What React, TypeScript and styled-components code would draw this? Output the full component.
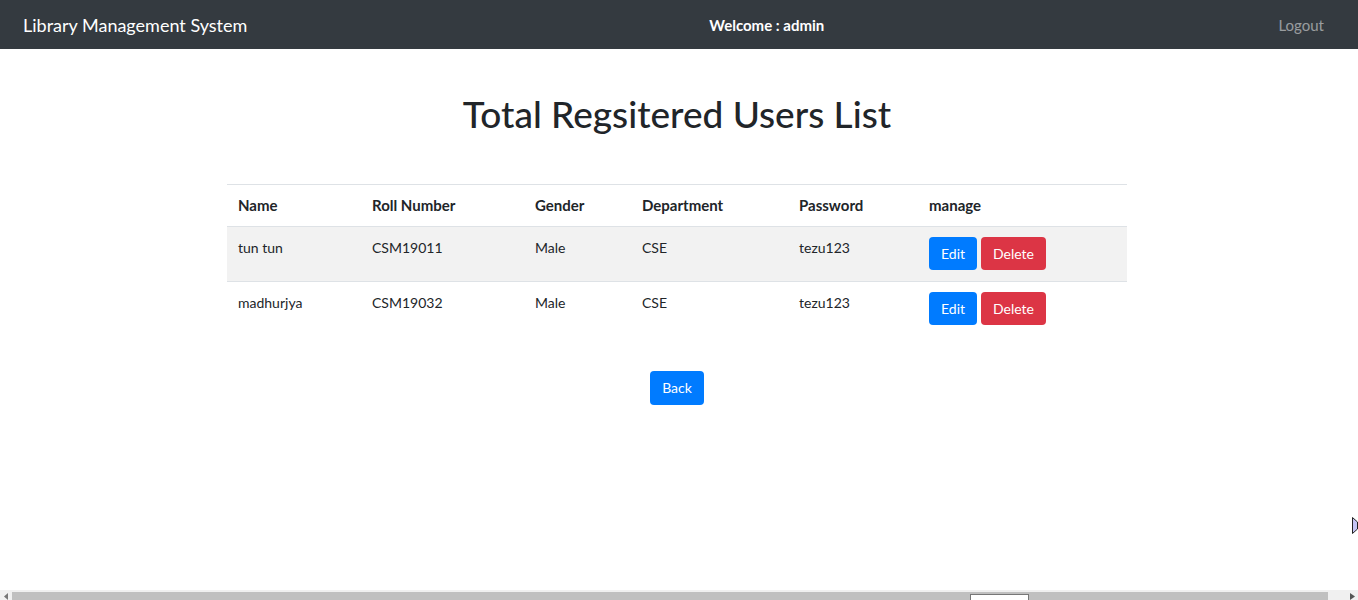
import React from "react";
import styled, { createGlobalStyle } from "styled-components";

type User = {
  name: string;
  roll: string;
  gender: string;
  department: string;
  password: string;
};

const users: User[] = [
  { name: "tun tun", roll: "CSM19011", gender: "Male", department: "CSE", password: "tezu123" },
  { name: "madhurjya", roll: "CSM19032", gender: "Male", department: "CSE", password: "tezu123" },
];

const columns = [
  { label: "Name", width: 134 },
  { label: "Roll Number", width: 163 },
  { label: "Gender", width: 107 },
  { label: "Department", width: 157 },
  { label: "Password", width: 130 },
  { label: "manage", width: 209 },
];

const GlobalStyle = createGlobalStyle`
  html, body {
    margin: 0;
    padding: 0;
    background: #fff;
    font-family: Lato, "Noto Sans", sans-serif;
    color: #212529;
  }
`;

export default function App() {
  return (
    <>
      <GlobalStyle />
      <Page>
        <NavBar>
          <Brand>Library Management System</Brand>
          <Welcome>Welcome : admin</Welcome>
          <Logout>Logout</Logout>
        </NavBar>
        <Main>
          <Title>Total Regsitered Users List</Title>
          <Table>
            <colgroup>
              {columns.map((c) => (
                <col key={c.label} style={{ width: c.width }} />
              ))}
            </colgroup>
            <thead>
              <tr>
                {columns.map((c) => (
                  <Th key={c.label}>{c.label}</Th>
                ))}
              </tr>
            </thead>
            <tbody>
              {users.map((u, i) => (
                <Row key={u.roll} striped={i % 2 === 0}>
                  <Td>{u.name}</Td>
                  <Td>{u.roll}</Td>
                  <Td>{u.gender}</Td>
                  <Td>{u.department}</Td>
                  <Td>{u.password}</Td>
                  <Td>
                    <Actions>
                      <Button variant="primary">Edit</Button>
                      <Button variant="danger">Delete</Button>
                    </Actions>
                  </Td>
                </Row>
              ))}
            </tbody>
          </Table>
          <BackWrap>
            <Button variant="primary" tall>
              Back
            </Button>
          </BackWrap>
          <SideMarker>
            <svg width="6" height="17" viewBox="0 0 6 17">
              <path d="M0.5 0.5 L5.5 5 L5.5 12 L0.5 16.5 Z" fill="#c4c4f4" stroke="#222" strokeWidth="1" />
            </svg>
          </SideMarker>
        </Main>
        <ScrollBar>
          <ScrollArrow>
            <svg width="5" height="7" viewBox="0 0 5 7">
              <path d="M4 0 L0 3.5 L4 7 Z" fill="#777" />
            </svg>
          </ScrollArrow>
          <ScrollTrack>
            <ScrollThumb />
          </ScrollTrack>
          <ScrollArrow>
            <svg width="5" height="7" viewBox="0 0 5 7">
              <path d="M0 0 L5 3.5 L0 7 Z" fill="#555" />
            </svg>
          </ScrollArrow>
        </ScrollBar>
      </Page>
    </>
  );
}

const Page = styled.div`
  height: 600px;
  display: flex;
  flex-direction: column;
  overflow: hidden;
`;

const NavBar = styled.nav`
  height: 49px;
  flex-shrink: 0;
  background: #343a40;
  display: flex;
  align-items: center;
  padding: 0 34px 0 23px;
`;

const Brand = styled.div`
  color: #fff;
  font-size: 18px;
  line-height: 24px;
  white-space: nowrap;
`;

const Welcome = styled.div`
  color: #fff;
  font-weight: 700;
  font-size: 15px;
  margin-left: 462px;
`;

const Logout = styled.div`
  color: rgba(255, 255, 255, 0.5);
  font-size: 15px;
  margin-left: auto;
`;

const Main = styled.main`
  flex: 1;
  position: relative;
  display: flex;
  flex-direction: column;
  align-items: center;
  padding-right: 4px;
`;

const Title = styled.h1`
  margin: 41px 0 0;
  font-size: 37px;
  font-weight: 500;
  line-height: 48px;
`;

const Table = styled.table`
  margin-top: 46px;
  width: 900px;
  border-collapse: collapse;
  table-layout: fixed;
  font-size: 14px;
  line-height: 20px;
  border-top: 1px solid #dee2e6;
`;

const Th = styled.th`
  text-align: left;
  font-weight: 700;
  font-size: 15px;
  padding: 10px 11px 11px;
  border-bottom: 1px solid #dee2e6;
`;

const Row = styled.tr<{ striped: boolean }>`
  background: ${(p) => (p.striped ? "#f2f2f2" : "#fff")};
  border-bottom: 1px solid #dee2e6;
  &:last-child {
    border-bottom: none;
  }
`;

const Td = styled.td`
  padding: 10px 11px 11px;
  vertical-align: top;
  line-height: 22px;
`;

const Actions = styled.div`
  display: flex;
  gap: 4px;
`;

const Button = styled.button<{ variant: "primary" | "danger"; tall?: boolean }>`
  font-family: inherit;
  font-size: 14px;
  line-height: ${(p) => (p.tall ? "22px" : "21px")};
  padding: 6px 12px;
  border: none;
  border-radius: 4px;
  color: #fff;
  background: ${(p) => (p.variant === "primary" ? "#007bff" : "#dc3545")};
  cursor: pointer;
`;

const BackWrap = styled.div`
  margin-top: 35px;
`;

const SideMarker = styled.div`
  position: absolute;
  right: 0;
  top: 468px;
  line-height: 0;
`;

const ScrollBar = styled.div`
  height: 10px;
  flex-shrink: 0;
  background: #f0f0f0;
  display: flex;
  align-items: flex-end;
`;

const ScrollArrow = styled.div`
  width: 12px;
  height: 8px;
  display: flex;
  align-items: center;
  justify-content: center;
`;

const ScrollTrack = styled.div`
  flex: 1;
  height: 8px;
  margin-right: 18px;
  background: #c0c0c0;
  position: relative;
`;

const ScrollThumb = styled.div`
  position: absolute;
  left: 958px;
  bottom: 0;
  width: 57px;
  height: 5px;
  background: #fff;
  border: 1px solid #777;
  border-bottom: none;
`;
